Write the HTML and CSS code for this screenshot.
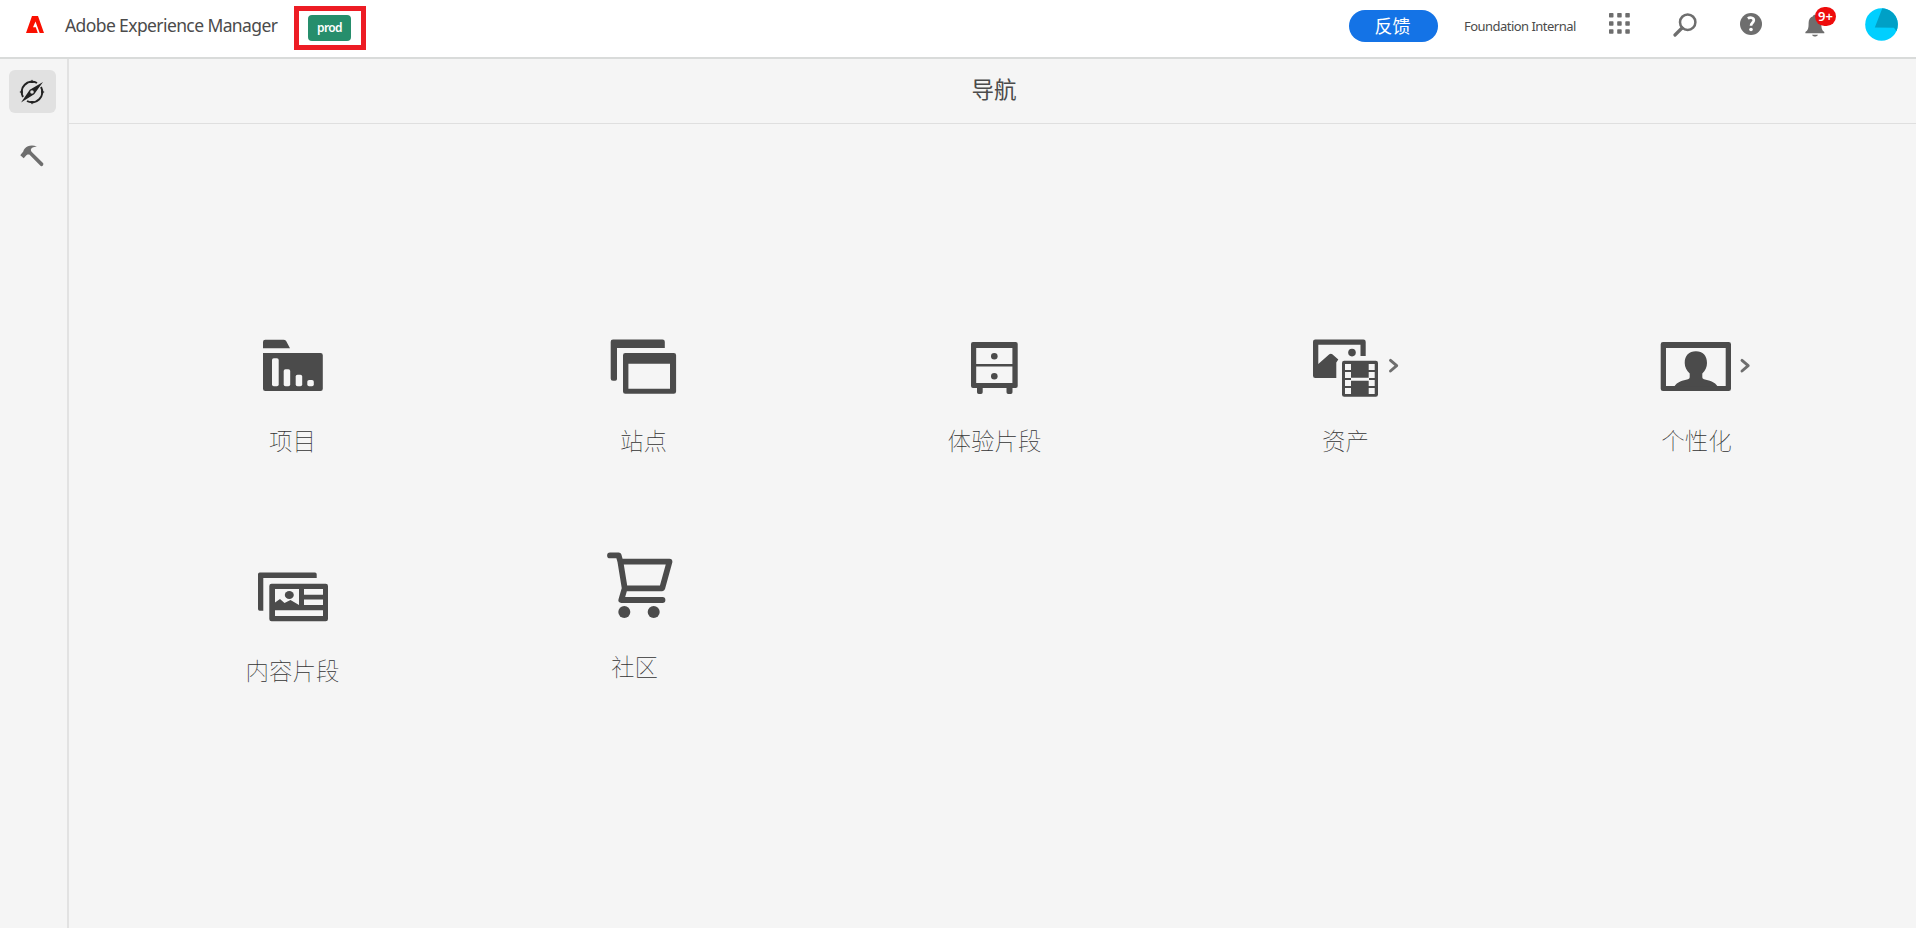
FILE: index.html
```html
<!DOCTYPE html>
<html lang="zh-CN">
<head>
<meta charset="utf-8">
<title>Adobe Experience Manager</title>
<link rel="stylesheet" href="styles.css">
</head>
<body>
<header class="topbar">
  <svg class="logo" width="18" height="17" viewBox="0 0 18 17"><path fill="#fa0f00" d="M6 0h6l6 17h-4.300L9.500 5.400 7 11.200h2.800l2 5.800H0z"/></svg>
  <h1 class="product">Adobe Experience Manager</h1>
  <div class="env-frame"><span class="env">prod</span></div>
  <div class="actions">
    <button class="feedback">反馈</button>
    <span class="org">Foundation Internal</span>
    <svg class="apps" width="21" height="21" viewBox="0 0 21 21" fill="#6e6e6e"><rect width="4.500" height="4.500" rx=".7"/><rect x="8.200" width="4.500" height="4.500" rx=".7"/><rect x="16.300" width="4.500" height="4.500" rx=".7"/><rect y="8.200" width="4.500" height="4.500" rx=".7"/><rect x="8.200" y="8.200" width="4.500" height="4.500" rx=".7"/><rect x="16.300" y="8.200" width="4.500" height="4.500" rx=".7"/><rect y="16.300" width="4.500" height="4.500" rx=".7"/><rect x="8.200" y="16.300" width="4.500" height="4.500" rx=".7"/><rect x="16.300" y="16.300" width="4.500" height="4.500" rx=".7"/></svg>
    <svg class="search" width="24" height="24" viewBox="0 0 24 24" fill="none" stroke="#6e6e6e"><circle cx="14.700" cy="9.200" r="7.700" stroke-width="2.500"/><path d="M9 15L2 22" stroke-width="3.200" stroke-linecap="round"/></svg>
    <svg class="help" width="22" height="22" viewBox="0 0 22 22"><circle cx="11" cy="11" r="11" fill="#6e6e6e"/><path d="M7.800 5.400C9.700 4.200 13.800 4.200 13.800 7.200c0 2.500-2.800 2.700-2.800 5.600" fill="none" stroke="#fff" stroke-width="2.700"/><circle cx="11" cy="16.500" r="1.800" fill="#fff"/></svg>
    <div class="alerts">
      <svg width="20" height="23" viewBox="0 0 20 23" fill="#6e6e6e"><path d="M8 2.200C8 .2 12 .2 12 2.200c3 .9 4.300 3.700 4.300 6.800 0 5.500.7 7.300 3 9V19.300H.4V18c2.600-1.700 3.200-3.500 3.200-9C3.600 5.900 5 3.100 8 2.200zM7 20.800h6c-.7 2.400-5.300 2.400-6 0z"/></svg>
      <span class="count">9+</span>
    </div>
    <svg class="avatar" width="33" height="33" viewBox="0 0 33 33"><circle cx="16.500" cy="16.500" r="16.300" fill="#00cfff"/><path fill="#00a0c6" d="M17.300.3A16.300 16.300 0 0 1 31.400 23.300L29 19.800 9.800 19.600z"/></svg>
  </div>
</header>
<div class="shell">
  <nav class="rail">
    <a class="rail-item selected"><svg width="26" height="26" viewBox="0 0 26 26"><g fill="none" stroke="#222" stroke-width="2"><path d="M18 4A10.300 10.300 0 0 0 4 18M22 8A10.300 10.300 0 0 1 8 22"/></g><path fill="#222" fill-rule="evenodd" d="M24 3L15.200 15.200 2 23.500 10.800 10.800zM13 11.200a1.800 1.800 0 1 0 0 3.600 1.800 1.800 0 0 0 0-3.600z"/><path fill="#222" d="M13 .5l2 3.500h-4zM13 25.500l2-3.500h-4zM.4 13l3.500-2v4zM25.600 13l-3.500-2v4z"/></svg></a>
    <a class="rail-item"><svg width="24" height="22" viewBox="0 0 24 22"><path fill="#6e6e6e" d="M.3 10.200L2.200 7.800C3.700 7 3 5.600 4.600 3.800 7.600.6 12.200-.4 17 1.800c-3.400-.2-5.400.8-6.100 2.800-.2.900.2 1.700.9 2.400L23 17.900c.8 1 .2 2.400-.8 3.100-.9.500-1.500.1-2-.4L9.300 9.600C7.600 9.200 6.600 9.600 5.500 11.200L3.700 13.200z"/></svg></a>
  </nav>
  <main class="main">
    <h2 class="heading">导航</h2>
    <div class="tiles">
      <a class="tile">
        <svg class="icon" viewBox="0 0 131 90"><path fill="#4b4b4b" d="M36 28.300V22q0-2.300 2.300-2.300h18.200q1.500 0 2.500 1l4 7.600zM36 33h57.500q2.300 0 2.300 2.300v33.400q0 2.300-2.300 2.300H38.300Q36 71 36 68.700z"/><g fill="#f5f5f5"><rect x="45" y="38.300" width="6.700" height="27.900" rx="1.800"/><rect x="56.700" y="49.200" width="6.500" height="17" rx="1.800"/><rect x="68.700" y="54.700" width="6.500" height="11.500" rx="1.800"/><rect x="80.300" y="60" width="6.500" height="6.200" rx="1.800"/></g></svg>
        <span class="label">项目</span>
      </a>
      <a class="tile">
        <svg class="icon" viewBox="0 0 131 90" fill="#4b4b4b"><path d="M35 19.500h49.500q2.300 0 2.300 2.300v6.200H39v31q0 1.700-1.700 1.700h-2.300q-2.300 0-2.300-2.300V21.800q0-2.300 2.300-2.300z"/><path fill-rule="evenodd" d="M47.300 33h48.500q2.300 0 2.300 2.300v36.200q0 2.300-2.300 2.300H47.300Q45 73.800 45 71.500V35.300Q45 33 47.300 33zM50.400 43.800v24.900H92V43.800z"/></svg>
        <span class="label">站点</span>
      </a>
      <a class="tile">
        <svg class="icon" viewBox="0 0 131 90" fill="#4b4b4b"><path fill-rule="evenodd" d="M44 22h42.700q2 0 2 2v42q0 2-2 2H83.500v4.300q0 1.700-1.700 1.700h-2.600q-1.700 0-1.700-1.700V68H53.700v4.300q0 1.700-1.700 1.700h-2.300q-1.700 0-1.700-1.700V68H44q-2 0-2-2V24q0-2 2-2zM47.200 28v16h36.200V28zM47.200 46.600V63h36.200V46.600z"/><circle cx="65.300" cy="36.300" r="3.300"/><circle cx="65.300" cy="56.300" r="3.300"/></svg>
        <span class="label">体验片段</span>
      </a>
      <a class="tile">
        <svg class="icon" viewBox="0 0 131 90" fill="#4b4b4b"><path fill-rule="evenodd" d="M35.300 19.500h48.100q2.300 0 2.300 2.300V36h-5.200V24.700H38.300V44l11-9.700q1.500-1.200 3 0l6 5.300-2 2.800V58H35.300Q33 58 33 55.700V21.800q0-2.300 2.300-2.300z"/><circle cx="72" cy="32.600" r="3.800"/><rect x="62" y="40.700" width="36" height="36" rx="2.200"/><path fill="#f5f5f5" d="M65 44h6v6h-6zM65 52h6v6h-6zM65 60h6v6h-6zM65 68h6v6h-6zM88.700 44h6v6h-6zM88.700 52h6v6h-6zM88.700 60h6v6h-6zM88.700 68h6v6h-6zM71 57.700h18v3H71z"/><path d="M110.500 40.400l6.200 5.300-6.200 5.300" fill="none" stroke="#6e6e6e" stroke-width="2.900" stroke-linecap="round" stroke-linejoin="round"/></svg>
        <span class="label">资产</span>
      </a>
      <a class="tile">
        <svg class="icon" viewBox="0 0 131 90" fill="#4b4b4b"><path fill-rule="evenodd" d="M32 22h65.700q2.300 0 2.300 2.300v44.400q0 2.300-2.300 2.300H32q-2.300 0-2.300-2.300V24.300Q29.700 22 32 22zM35 28v38h59.700V28z"/><path d="M43.300 66.500C46 62 52 60.300 57 59.300q1.700-.3 1.700-2V53.500C55.700 51 53.700 47 53.700 43c0-7.500 4.300-11.700 11.200-11.700S76 35.500 76 43c0 4-1.700 8-4.700 10.500v3.800q0 1.700 1.700 2c5 1 11 2.700 13.700 7.200z"/><path d="M111 40.400l6.200 5.300-6.200 5.300" fill="none" stroke="#6e6e6e" stroke-width="2.900" stroke-linecap="round" stroke-linejoin="round"/></svg>
        <span class="label">个性化</span>
      </a>
      <a class="tile">
        <svg class="icon" viewBox="0 0 131 90" fill="#4b4b4b"><path d="M32.700 32.600H88q1.700 0 1.700 1.700V38H36.300v32.700h-3.600q-1.700 0-1.700-1.700V34.300q0-1.700 1.700-1.700z"/><path fill-rule="evenodd" d="M44.600 43.700h54.100q2.300 0 2.300 2.300v33q0 2.300-2.300 2.300H44.600q-2.300 0-2.300-2.300V46q0-2.300 2.300-2.300zM48 49v13.500l5-3.500 4.500 4 6-3L72 65V49zM77 49v5.700h19V49zM77 59.600V65h19v-5.400zM48 70.300V76h48v-5.700z"/><ellipse cx="62.300" cy="55" rx="4.500" ry="4"/></svg>
        <span class="label">内容片段</span>
      </a>
      <a class="tile cart">
        <svg class="icon" viewBox="0 0 131 90"><path d="M32 15.400h8.600l1.800 6.300H91.500L84.200 48.300H46.700L42.400 21.700M46.700 48.300L43.300 60H84.500" fill="none" stroke="#4b4b4b" stroke-width="5.800" stroke-linecap="round" stroke-linejoin="round"/><circle cx="46.300" cy="71.900" r="6" fill="#4b4b4b"/><circle cx="75.700" cy="71.900" r="6" fill="#4b4b4b"/></svg>
        <span class="label">社区</span>
      </a>
    </div>
  </main>
</div>
</body>
</html>
```
FILE: styles.css
```css
* { box-sizing: border-box; }
body {
  margin: 0;
  height: 928px;
  overflow: hidden;
  display: flex;
  flex-direction: column;
  background: #f5f5f5;
  color: #4b4b4b;
  font-family: "Noto Sans", "Noto Sans CJK SC", sans-serif;
}
svg { display: block; flex: none; }
.topbar {
  flex: none;
  height: 59px;
  display: flex;
  align-items: flex-start;
  padding-left: 26px;
  background: #fff;
  border-bottom: 2px solid #d9dbda;
}
.logo { margin-top: 16px; }
.product {
  width: 229px;
  margin: 13px 0 0 21px;
  font-size: 17.500px;
  line-height: 24px;
  font-weight: 400;
  letter-spacing: -0.600px;
  white-space: nowrap;
}
.env-frame {
  width: 72px;
  height: 44px;
  margin-top: 6px;
  border: 5px solid #ed1c24;
  display: flex;
  padding: 4px 0 0 9px;
}
.env {
  width: 43px;
  height: 26px;
  border-radius: 4px;
  background: #268e6c;
  color: #fff;
  font-size: 12px;
  font-weight: 600;
  line-height: 25px;
  letter-spacing: -0.600px;
  text-align: center;
}
.actions {
  margin-left: auto;
  width: 567px;
  display: flex;
  align-items: flex-start;
}
.feedback {
  width: 89px;
  height: 32px;
  margin-top: 10px;
  padding: 0 2px 3px 0;
  border: 0;
  border-radius: 16px;
  background: #1473e6;
  color: #fff;
  font: 400 18px/28px "Noto Sans CJK SC", sans-serif;
}
.org {
  width: 119px;
  margin: 16px 0 0 26px;
  font-size: 13px;
  line-height: 20px;
  letter-spacing: -0.530px;
  white-space: nowrap;
}
.apps { margin: 13px 0 0 26px; }
.search { margin: 13px 0 0 43px; }
.help { margin: 13px 0 0 43px; }
.alerts { position: relative; margin: 14px 0 0 43px; }
.count {
  position: absolute;
  left: 10px;
  top: -7px;
  width: 21px;
  height: 19px;
  border-radius: 10px;
  background: #ee0c0c;
  color: #fff;
  font-size: 13px;
  line-height: 19px;
  font-weight: 600;
  text-align: center;
}
.avatar { margin: 8px 0 0 40px; }
.shell { flex: 1; display: flex; min-height: 0; }
.rail {
  width: 69px;
  border-right: 2px solid #e2e2e2;
  padding: 11px 0 0 9px;
  display: flex;
  flex-direction: column;
  gap: 21px;
}
.rail-item {
  width: 47px;
  height: 43px;
  padding-right: 1px;
  border-radius: 6px;
  display: flex;
  align-items: center;
  justify-content: center;
}
.selected { background: #e1e1e1; }
.main { flex: 1; }
.heading {
  height: 65px;
  margin: 0;
  border-bottom: 1px solid #dfdfdf;
  font: 400 22.500px/59px "Noto Sans CJK SC", sans-serif;
  text-align: center;
  padding-left: 3px;
}
.tiles {
  display: grid;
  grid-template-columns: repeat(5, 351px);
  grid-auto-rows: 220px;
  padding: 196px 0 0 48px;
}
.tile { display: flex; flex-direction: column; align-items: center; }
.icon { width: 131px; height: 90px; }
.label {
  margin-top: 12px;
  font: 100 23.500px/36px "Noto Sans CJK SC", sans-serif;
  color: #333;
}
.tile:nth-child(6) .label { margin-top: 22px; }
.cart .label { margin-top: 18px; padding-right: 18px; }
```
